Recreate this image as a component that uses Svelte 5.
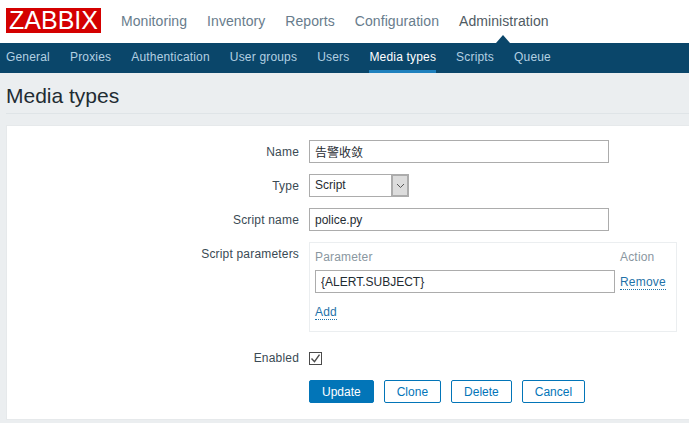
<script>
    const topMenu = ['Monitoring', 'Inventory', 'Reports', 'Configuration', 'Administration'];
    const subMenu = ['General', 'Proxies', 'Authentication', 'User groups', 'Users', 'Media types', 'Scripts', 'Queue'];
</script>

<div class="page">
    <header class="top">
        <div class="logo">ZABBIX</div>
        <nav class="main-nav">
            {#each topMenu as item}
                <a class:selected={item === 'Administration'} href="#/">{item}</a>
            {/each}
        </nav>
    </header>

    <nav class="sub-nav">
        {#each subMenu as item}
            <a class:selected={item === 'Media types'} href="#/">{item}</a>
        {/each}
    </nav>

    <h1>Media types</h1>

    <main class="card">
        <div class="row">
            <label for="name">Name</label>
            <input id="name" class="wide" type="text" value="告警收敛" />
        </div>

        <div class="row">
            <label for="type">Type</label>
            <div class="select" id="type">
                <span>Script</span>
                <span class="arrow">
                    <svg width="9" height="6" viewBox="0 0 9 6"><path d="M1 1l3.5 3.5L8 1" fill="none" stroke="#555" stroke-width="1" /></svg>
                </span>
            </div>
        </div>

        <div class="row">
            <label for="script">Script name</label>
            <input id="script" class="wide" type="text" value="police.py" />
        </div>

        <div class="row params-row">
            <span class="label">Script parameters</span>
            <div class="params">
                <div class="params-head">
                    <span>Parameter</span>
                    <span class="action">Action</span>
                </div>
                <div class="params-line">
                    <input class="wide param-input" type="text" value={'{ALERT.SUBJECT}'} />
                    <a class="link" href="#/">Remove</a>
                </div>
                <a class="link add" href="#/">Add</a>
            </div>
        </div>

        <div class="row enabled-row">
            <span class="label">Enabled</span>
            <span class="check">
                <svg width="13" height="13" viewBox="0 0 13 13"><path d="M2.5 6.5l3 3.2 5-7" fill="none" stroke="#4a4a4a" stroke-width="1.4" /></svg>
            </span>
        </div>

        <div class="buttons">
            <button class="primary">Update</button>
            <button>Clone</button>
            <button>Delete</button>
            <button>Cancel</button>
        </div>
    </main>
</div>

<style>
    :global(body) {
        margin: 0;
        background: #ebeef0;
    }

    .page {
        height: 423px;
        overflow: hidden;
        font-family: "Liberation Sans", Arial, "Noto Sans CJK SC", sans-serif;
        font-size: 12px;
        letter-spacing: 0.18px;
        color: #1f2c33;
    }

    .top {
        display: flex;
        align-items: flex-start;
        height: 43px;
        background: #fff;
    }

    .logo {
        margin: 8px 0 0 6px;
        width: 95px;
        height: 25px;
        background: #d40000;
        color: #fff;
        font-size: 25px;
        line-height: 25px;
        letter-spacing: 0;
        text-align: center;
    }

    .main-nav {
        display: flex;
        gap: 20px;
        margin-left: 20px;
        padding-top: 13px;
    }

    .main-nav a {
        position: relative;
        font-size: 14px;
        line-height: 16px;
        letter-spacing: 0.07px;
        color: #687c8c;
        text-decoration: none;
    }

    .main-nav a.selected {
        color: #4f5b63;
    }

    .main-nav a.selected::after {
        content: "";
        position: absolute;
        left: 37px;
        top: 22px;
        border: 7px solid transparent;
        border-top: 0;
        border-bottom: 8px solid #0a466a;
    }

    .sub-nav {
        display: flex;
        gap: 20px;
        height: 30px;
        padding-left: 6px;
        background: #0a466a;
    }

    .sub-nav a {
        line-height: 29px;
        color: #b3d0e2;
        text-decoration: none;
    }

    .sub-nav a.selected {
        color: #fff;
        border-bottom: 3px solid #1f80bd;
        height: 27px;
    }

    h1 {
        margin: 0 0 11px 6px;
        height: 40px;
        border-bottom: 1px solid #dfe4e7;
        font-size: 21px;
        font-weight: normal;
        line-height: 46px;
        letter-spacing: 0;
        color: #1f2c33;
    }

    .card {
        margin-left: 6px;
        height: 295px;
        background: #fff;
        border: 1px solid #e6e9eb;
        border-right: 0;
        box-sizing: border-box;
        padding-top: 14px;
    }

    .row {
        display: flex;
        align-items: center;
        gap: 10px;
        height: 23px;
        margin-bottom: 11px;
    }

    label, .label {
        width: 292px;
        text-align: right;
        color: #3a4a54;
    }

    input {
        box-sizing: border-box;
        height: 23px;
        padding: 0 5px;
        border: 1px solid #acacac;
        font: inherit;
        letter-spacing: 0;
        color: #1f2c33;
        outline: none;
    }

    .wide {
        width: 300px;
    }

    .param-input {
        padding-top: 1px;
    }

    .select {
        display: flex;
        justify-content: space-between;
        box-sizing: border-box;
        width: 100px;
        height: 23px;
        border: 1px solid #acacac;
        padding-left: 5px;
        line-height: 21px;
        letter-spacing: 0;
    }

    .arrow {
        display: flex;
        align-items: center;
        justify-content: center;
        box-sizing: border-box;
        width: 18px;
        background: #dcdcdc;
        border: 2px solid #acacac;
        margin: -1px -1px -1px 0;
    }

    .params-row {
        align-items: flex-start;
        height: auto;
        margin-bottom: 0;
    }

    .params-row .label {
        padding-top: 5px;
    }

    .params {
        box-sizing: border-box;
        width: 368px;
        height: 90px;
        border: 1px solid #ebeef0;
        padding: 0 5px;
    }

    .params-head {
        display: flex;
        justify-content: space-between;
        height: 27px;
        line-height: 29px;
        color: #8a979f;
    }

    .action {
        width: 51px;
    }

    .params-line {
        display: flex;
        align-items: center;
        gap: 5px;
    }

    .params-line .link {
        margin-top: 2px;
    }

    .link {
        color: #1f72a8;
        text-decoration: none;
        border-bottom: 1px dotted #1f72a8;
        line-height: 14px;
    }

    .add {
        display: inline-block;
        margin-top: 12px;
    }

    .enabled-row {
        height: 13px;
        margin: 20px 0 15px;
    }

    .enabled-row .label {
        padding-bottom: 2px;
    }

    .check {
        box-sizing: border-box;
        width: 13px;
        height: 13px;
        border: 1px solid #4a4a4a;
        display: flex;
        align-items: center;
        justify-content: center;
    }

    .check svg {
        flex: none;
    }

    .buttons {
        display: flex;
        gap: 10px;
        padding-left: 302px;
    }

    button {
        box-sizing: border-box;
        height: 23px;
        padding: 0 12px;
        background: #fff;
        border: 1px solid #0275b8;
        border-radius: 2px;
        color: #0275b8;
        font: inherit;
        letter-spacing: 0;
    }

    button.primary {
        background: #0275b8;
        color: #fff;
    }
</style>
